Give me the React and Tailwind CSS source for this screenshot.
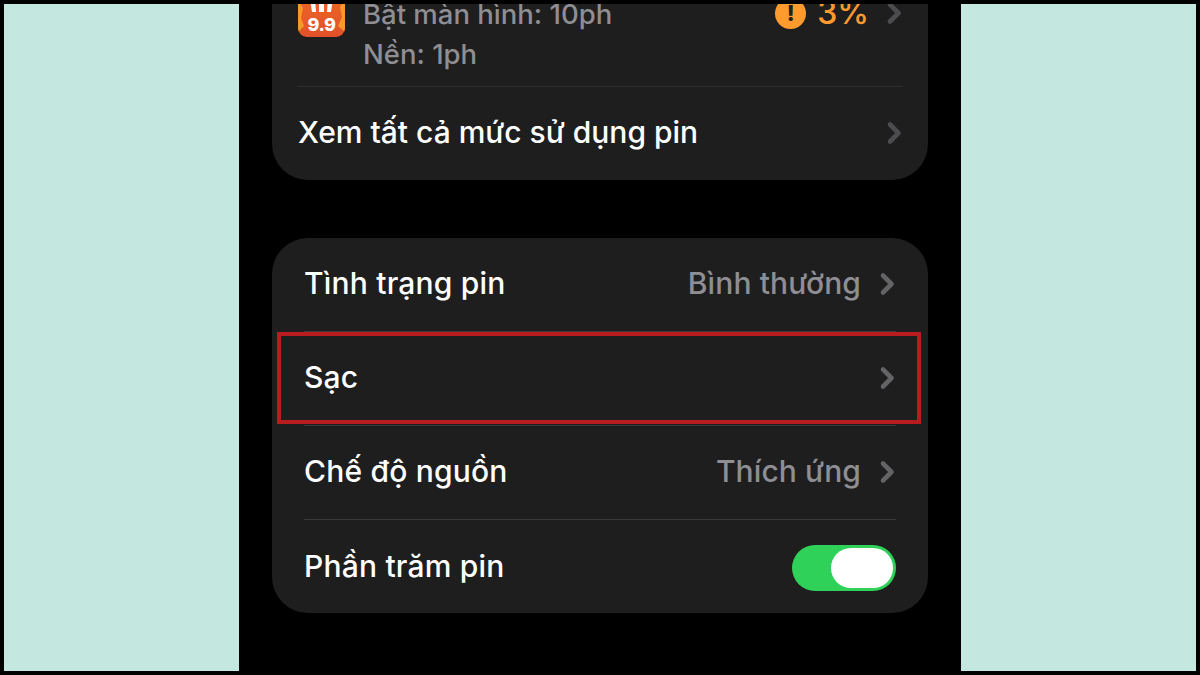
const FONT = "font-['Inter','Noto_Sans',sans-serif]";

function Chevron({ className = '', color = '#636366' }) {
  return (
    <svg className={`w-[16px] h-[24px] shrink-0 ${className}`} viewBox="0 0 16 24" fill="none" stroke={color} strokeWidth={4.6} strokeLinecap="round" strokeLinejoin="round">
      <path d="M4 3.5l8.5 8.5-8.5 8.5" />
    </svg>
  );
}

function AppIcon() {
  return (
    <div className="relative w-[47px] h-[47px] shrink-0 rounded-[9px] overflow-hidden bg-gradient-to-b from-[#ee6a24] to-[#e2502a]">
      <svg className="absolute left-0 top-0 w-[47px] h-[47px]" viewBox="0 0 47 47">
        <path d="M0 10l5 8-2 10 3 8-6 6zM47 8l-5 9 2 10-4 9 7 6z" fill="#f7a42c" opacity="0.85" />
        <path d="M12 8h5l1 14h-4zM21 8h5v14h-5zM30 8h5l-2 14h-4z" fill="#fff" />
      </svg>
      <span className="absolute left-0 right-0 bottom-[3px] text-center text-white text-[18px] leading-[18px] font-extrabold tracking-[-0.5px]">9.9</span>
    </div>
  );
}

function Row({ label, value, divider = true, children }) {
  return (
    <div className={`h-[94px] mx-[32px] pb-[2px] flex items-center ${divider ? 'border-b border-[#3a3a3c]' : ''}`}>
      <span className="flex-1 text-white text-[30px] font-medium tracking-[0.2px]">{label}</span>
      {value && <span className="text-[#8e8e93] text-[30px] font-medium tracking-[0.1px] mr-[18px]">{value}</span>}
      {children || <Chevron className="mr-[1px]" />}
    </div>
  );
}

export default function App() {
  return (
    <div className={`w-[1200px] h-[675px] bg-black p-[4px] flex overflow-hidden ${FONT}`}>
      <div className="w-[235px] bg-[#c4e7e0]" />

      <div className="flex-1 h-full overflow-hidden px-[33px] flex flex-col">
        {/* Usage card, cut off by the top of the shot */}
        <div className="h-[176px] shrink-0 bg-[#1e1e1f] rounded-b-[36px] flex flex-col justify-end overflow-hidden">
          <div className="mx-[26px] h-[82px] shrink-0 border-b border-[#2e2e30] flex items-start">
            <div className="mr-[18px] -mt-[15px]"><AppIcon /></div>
            <div className="flex-1 -mt-[11px] text-[#8e8e93] text-[27.5px] font-medium leading-[40px]">
              <div>Bật màn hình: 10ph</div>
              <div>Nền: 1ph</div>
            </div>
            <div className="flex items-center -mt-[8px] h-[32px]">
              <div className="w-[31px] h-[31px] rounded-full bg-[#ff9a2e] flex items-center justify-center text-[#1e1e1f] text-[22px] font-extrabold mr-[11px]">!</div>
              <span className="text-[#ff9a2e] text-[32px] font-medium mr-[17px]">3%</span>
              <Chevron color="#4c4c4f" />
            </div>
          </div>
          <div className="mx-[26px] h-[93px] pb-[2px] shrink-0 flex items-center">
            <span className="flex-1 text-white text-[30px] font-medium">Xem tất cả mức sử dụng pin</span>
            <Chevron color="#4c4c4f" />
          </div>
        </div>

        {/* Battery settings card */}
        <div className="relative mt-[58px] h-[375px] shrink-0 bg-[#1e1e1f] rounded-[36px]">
          <Row label="Tình trạng pin" value="Bình thường" />
          <Row label="Sạc" />
          <Row label="Chế độ nguồn" value="Thích ứng" />
          <Row label="Phần trăm pin" divider={false}>
            <div className="w-[104px] h-[46px] mt-[3px] rounded-full bg-[#30d158] p-[3px] flex justify-end">
              <div className="w-[62px] h-[40px] rounded-full bg-white" />
            </div>
          </Row>
          {/* Red highlight over the Sạc row */}
          <div className="absolute left-[5px] right-[7px] top-[94px] h-[92px] border-[4px] border-[#b91c1f]" />
        </div>
      </div>

      <div className="w-[235px] bg-[#c4e7e0]" />
    </div>
  );
}
